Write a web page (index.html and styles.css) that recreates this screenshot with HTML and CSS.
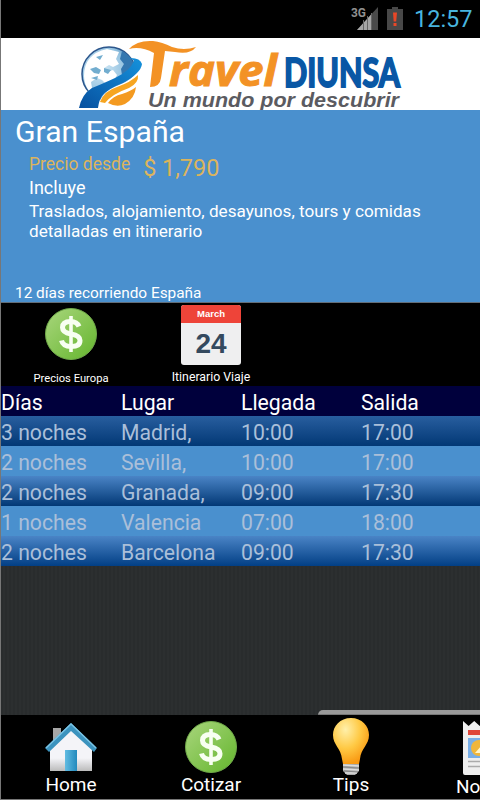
FILE: index.html
```html
<!DOCTYPE html>
<html lang="es">
<head>
    <meta charset="UTF-8">
    <meta name="viewport" content="width=device-width, initial-scale=1.0">
    <title>Travel Diunsa</title>
    <link rel="stylesheet" href="styles.css">
</head>
<body>
    <div class="app">
        <header class="status-bar">
            <svg class="status-icons" width="62" height="38" viewBox="0 0 62 38">
                <text x="0" y="17" class="network" textLength="15" lengthAdjust="spacingAndGlyphs">3G</text>
                <path d="M6 30L27 7V30Z" fill="#4a4a4a"/>
                <path d="M6 30L21 13.5V30Z" fill="#a6a6a6"/>
                <path d="M12.5 20v10M16.5 16v14M20.5 13v17" stroke="#666" stroke-width="1"/>
                <path d="M36 9h5V7h6v2h5v21H36Z" fill="#484848"/>
                <path d="M42 12.500h4l-.8 9h-2.500zM42.500 23h3v3h-3z" fill="#e94727"/>
            </svg>
            <span class="clock">12:57</span>
        </header>

        <div class="logo">
            <svg width="479" height="72" viewBox="1 38 479 72">
                <defs>
                    <radialGradient id="globe" cx=".35" cy=".4" r=".7">
                        <stop offset="0" stop-color="#d5eaf6"/>
                        <stop offset=".6" stop-color="#98c5e2"/>
                        <stop offset="1" stop-color="#286eaa"/>
                    </radialGradient>
                    <linearGradient id="swoosh" x1="0" y1="1" x2="1" y2="0">
                        <stop offset="0" stop-color="#07509f"/>
                        <stop offset="1" stop-color="#1592dc"/>
                    </linearGradient>
                </defs>
                <circle cx="109" cy="74" r="27" fill="url(#globe)" stroke="#2c568c" stroke-width="1.500"/>
                <path d="M84 76q0-22 23-27l12 3-3 7 3 5-6 3-4-2-5 3 3 4 6-2 4 5-4 8-6 2-5-5-5-2-6 4 1 6-3 3q-5-7-5-15z" fill="#fff"/>
                <path d="M90 69l6-2 5 3-2 4-5-1zM96 57l7-2-3 5zM91 78l7-2-1 4zM104 68l7 2-3 4-4-2z" fill="#72adcf"/>
                <path d="M122 51q9 4 12 14l-5 6-7 4-1-6 3-5-4-5z" fill="#3477b0"/>
                <path d="M96 109l4-9q5-10 19-15 13-5 20-16l3 8-8 32z" fill="#fff"/>
                <path d="M79 108q3-14 13-20 10-4 23-10 15-7 19-17-2-3-6-3 12-1 14 6-1 9-19 19-16 6-21 13-3 4-4 12z" fill="url(#swoosh)"/>
                <path d="M100 102q4-11 17-15 14-5 21-12 1 8-9 13-17 6-24 15z" fill="#f6a521"/>
                <path d="M108 103q5-7 14-9 9-3 14-7-1 11-11 17-8 4-17-1z" fill="#f49a20"/>
                <path d="M129 49q8-9 24-8 9 1 19 6 12 4 24 0-6 8-21 5l-10-1-4 27q-1 9-11 9l4-34q-13-7-25-4z" fill="#f39225"/>
                <text x="169" y="86" class="logo-travel" textLength="108" lengthAdjust="spacingAndGlyphs">ravel</text>
                <text x="284" y="87" class="logo-diunsa" textLength="116" lengthAdjust="spacingAndGlyphs">DIUNSA</text>
                <text x="148" y="107" class="logo-slogan" textLength="251" lengthAdjust="spacingAndGlyphs">Un mundo por descubrir</text>
            </svg>
        </div>

        <section class="trip">
            <h1 class="trip-title">Gran España</h1>
            <div class="trip-details">
                <div class="price">
                    <span class="price-label">Precio desde</span>
                    <span class="price-value">$ 1,790</span>
                </div>
                <div class="includes">Incluye</div>
                <p class="description">Traslados, alojamiento, desayunos, tours y comidas<br>detalladas en itinerario</p>
            </div>
            <div class="duration">12 días recorriendo España</div>
        </section>

        <div class="actions">
            <a class="action">
                <svg width="54" height="54" viewBox="0 0 54 54">
                    <defs>
                        <linearGradient id="green" x1="0" y1="0" x2="1" y2="1">
                            <stop offset="0" stop-color="#a9d67d"/>
                            <stop offset="1" stop-color="#64b52d"/>
                        </linearGradient>
                    </defs>
                    <g id="dollar">
                        <circle cx="27" cy="27" r="25.500" fill="url(#green)" stroke="#70a94a"/>
                        <path d="M35 19.500q-2-5-8.500-5-8 0-8 6 0 5 8.500 6.500 9 1.500 9 6.500 0 6-9 6-8 0-9.500-6" fill="none" stroke="#f8fff2" stroke-width="5"/>
                        <path d="M27 9v36" stroke="#f8fff2" stroke-width="3.600"/>
                    </g>
                </svg>
                <span class="action-label action-label-low">Precios Europa</span>
            </a>
            <a class="action">
                <svg width="62" height="62" viewBox="0 0 62 62">
                    <rect x="1" y="1" width="60" height="60" rx="3" fill="#efeff0"/>
                    <path d="M1 19V4a3 3 0 0 1 3-3h54a3 3 0 0 1 3 3v15z" fill="#ee4439"/>
                    <text x="31" y="13" class="calendar-month">March</text>
                    <text x="31" y="49" class="calendar-day">24</text>
                </svg>
                <span class="action-label">Itinerario Viaje</span>
            </a>
        </div>

        <table class="itinerary">
            <thead>
                <tr><th>Días</th><th>Lugar</th><th>Llegada</th><th>Salida</th></tr>
            </thead>
            <tbody>
                <tr><td>3 noches</td><td>Madrid,</td><td>10:00</td><td>17:00</td></tr>
                <tr><td>2 noches</td><td>Sevilla,</td><td>10:00</td><td>17:00</td></tr>
                <tr><td>2 noches</td><td>Granada,</td><td>09:00</td><td>17:30</td></tr>
                <tr><td>1 noches</td><td>Valencia</td><td>07:00</td><td>18:00</td></tr>
                <tr><td>2 noches</td><td>Barcelona</td><td>09:00</td><td>17:30</td></tr>
            </tbody>
        </table>

        <div class="empty-area">
            <div class="drawer-edge"></div>
        </div>

        <nav class="bottom-nav">
            <a class="nav-item">
                <svg width="54" height="54" viewBox="0 0 54 54">
                    <defs>
                        <linearGradient id="door" x2="1"><stop stop-color="#62bce2"/><stop offset="1" stop-color="#238abd"/></linearGradient>
                        <linearGradient id="wall" x2="0" y2="1"><stop offset=".7" stop-color="#f4f4f8"/><stop offset="1" stop-color="#bbb"/></linearGradient>
                    </defs>
                    <path d="M9 8h8v16H9z" fill="#a6a6a6"/>
                    <path d="M6 27L27 8l21 20v23H6z" fill="url(#wall)"/>
                    <path d="M21 30h12v21H21z" fill="url(#door)"/>
                    <path d="M1 28L27 3l26 25-3 4-23-21L5 32z" fill="#3c93be"/>
                    <path d="M2 28L27 4l25 24" fill="none" stroke="#79c3e4" stroke-width="1.500"/>
                </svg>
                <span>Home</span>
            </a>
            <a class="nav-item">
                <svg width="54" height="54" viewBox="0 0 54 54"><use href="#dollar"/></svg>
                <span>Cotizar</span>
            </a>
            <a class="nav-item">
                <svg width="54" height="58" viewBox="0 0 54 58">
                    <defs>
                        <radialGradient id="bulb" cx=".35" cy=".25" r=".75"><stop stop-color="#fff0aa"/><stop offset=".55" stop-color="#ffc944"/><stop offset="1" stop-color="#f99a13"/></radialGradient>
                    </defs>
                    <path d="M27 1C16 1 9 9 9 18c0 10 8 13 9 24l1 5h16l1-5c1-11 9-14 9-24C45 9 38 1 27 1z" fill="url(#bulb)"/>
                    <path d="M19 47h16v7l-4 4h-8l-4-4z" fill="#aaa"/>
                    <path d="M19 48l16 1M19 52l16 1M21 56h12" stroke="#ddd" stroke-width="1.500"/>
                    <path d="M19 50l16 1M20 54l14 1" stroke="#888"/>
                </svg>
                <span>Tips</span>
            </a>
            <a class="nav-item">
                <svg width="58" height="56" viewBox="0 0 58 56">
                    <path d="M1 1l5.600 5 5.600-5 5.600 5 5.600-5 5.600 5 5.600-5 5.600 5 5.600-5 5.600 5 5.600-5v54H3q-2 0-2-2z" fill="#eee"/>
                    <path d="M6 10h46v5H6z" fill="#df4638"/>
                    <path d="M6 18h46v20H6z" fill="#78aee7"/>
                    <circle cx="17" cy="28" r="8" fill="#efb63c"/>
                    <path d="M13 33l7-8 10 8z" fill="#fff6cc"/>
                    <path d="M6 41.500h46M6 46.500h46" stroke="#aaa" stroke-width="1.500"/>
                </svg>
                <span>Noticias</span>
            </a>
        </nav>
    </div>
</body>
</html>
```
FILE: styles.css
```css
* {
    box-sizing: border-box;
}
body {
    margin: 0;
    background-color: #000;
    color: #fff;
    font-family: Roboto, sans-serif;
}
.app {
    display: flex;
    flex-direction: column;
    width: 480px;
    height: 800px;
    overflow: hidden;
    border-left: 1px solid #777;
    border-bottom: 1px solid #777;
}
svg {
    display: block;
    flex-shrink: 0;
}
.status-bar {
    display: flex;
    justify-content: flex-end;
    align-items: center;
    gap: 1px;
    height: 38px;
    flex-shrink: 0;
    padding-right: 9px;
    background-color: #000;
}
.network {
    font-size: 13px;
    font-weight: 700;
    fill: #909090;
}
.clock {
    width: 57px;
    color: #48b5df;
    font-size: 23.500px;
    line-height: 40px;
    text-align: right;
}
.logo {
    height: 72px;
    flex-shrink: 0;
    background-color: #fff;
}
.logo-travel {
    font: italic 700 43px "Open Sans", sans-serif;
    fill: #f39225;
    stroke: #f39225;
    stroke-width: 1px;
}
.logo-diunsa {
    font: 700 41px Lato, sans-serif;
    fill: #0957a5;
    stroke: #0957a5;
    stroke-width: 2px;
}
.logo-slogan {
    font: italic 700 19.500px "Liberation Sans", sans-serif;
    fill: #5b5b61;
}
.trip {
    display: flex;
    flex-direction: column;
    height: 193px;
    flex-shrink: 0;
    padding: 4px 14px 0;
    background-color: #4a90ce;
    border-bottom: 1px solid #626d78;
}
.trip-title {
    margin: 0;
    font-size: 30.200px;
    font-weight: 400;
    line-height: 36px;
}
.trip-details {
    padding-left: 14px;
}
.price {
    display: flex;
    gap: 13px;
    height: 27px;
    color: #dcb45d;
}
.price-label {
    font-size: 17.500px;
    line-height: 28px;
}
.price-value {
    font-size: 23.400px;
    line-height: 36px;
}
.includes {
    font-size: 18px;
    line-height: 22px;
}
.description {
    margin: 2px 0 0;
    font-size: 17.150px;
    line-height: 20px;
    white-space: nowrap;
}
.duration {
    margin-top: auto;
    font-size: 15.400px;
    line-height: 18px;
}
.actions {
    display: flex;
    height: 83px;
    flex-shrink: 0;
    background-color: #000;
}
.action {
    display: flex;
    flex-direction: column;
    align-items: center;
    width: 140px;
}
.action svg {
    margin-top: 1px;
}
.action:first-child svg {
    margin-top: 4px;
}
.calendar-month {
    font: 700 9.500px "Liberation Sans", sans-serif;
    fill: #fff;
    text-anchor: middle;
}
.calendar-day {
    font: 700 28px "Liberation Sans", sans-serif;
    fill: #34495e;
    text-anchor: middle;
}
.action-label {
    margin-top: 4px;
    font-size: 12.300px;
    line-height: 14px;
}
.action-label-low {
    margin-top: 11px;
    font-size: 11.200px;
}
.itinerary {
    width: 480px;
    flex-shrink: 0;
    table-layout: fixed;
    border-collapse: collapse;
    font-size: 21.200px;
    color: #aabfd9;
}
.itinerary th,
.itinerary td {
    height: 30px;
    padding: 3px 0 0;
    line-height: 27px;
    font-weight: 400;
    text-align: left;
}
.itinerary thead tr {
    background-color: #00003c;
    color: #fff;
}
.itinerary tbody tr:nth-child(odd) {
    background: linear-gradient(#4a84c6, #023875);
}
.itinerary tbody tr:first-child {
    background: linear-gradient(#285e9f, #023875);
}
.itinerary tbody tr:nth-child(even) {
    background-color: #4a90ce;
}
.itinerary tbody tr:last-child {
    background: linear-gradient(#4a84c6, #023f85);
}
.empty-area {
    display: flex;
    flex: 1;
    align-items: flex-end;
    justify-content: flex-end;
    background: repeating-linear-gradient(90deg, #292c2d 0 2px, #2c2f30 2px 4px);
}
.drawer-edge {
    width: 162px;
    height: 5px;
    border-top-left-radius: 5px;
    background-color: #999;
    border-bottom: 1px solid #777;
}
.bottom-nav {
    display: flex;
    height: 84px;
    flex-shrink: 0;
    overflow: hidden;
    background-color: #000;
}
.nav-item {
    display: flex;
    flex-direction: column;
    align-items: center;
    justify-content: space-between;
    flex: 0 0 140px;
    height: 83px;
    padding: 5px 0 3px;
    font-size: 19px;
    line-height: 22px;
}
.nav-item:nth-child(3) {
    padding-top: 2px;
}
.nav-item:nth-child(3),
.nav-item:nth-child(4) {
    justify-content: flex-start;
}
.nav-item:nth-child(3) span {
    margin-top: -1px;
}
```
